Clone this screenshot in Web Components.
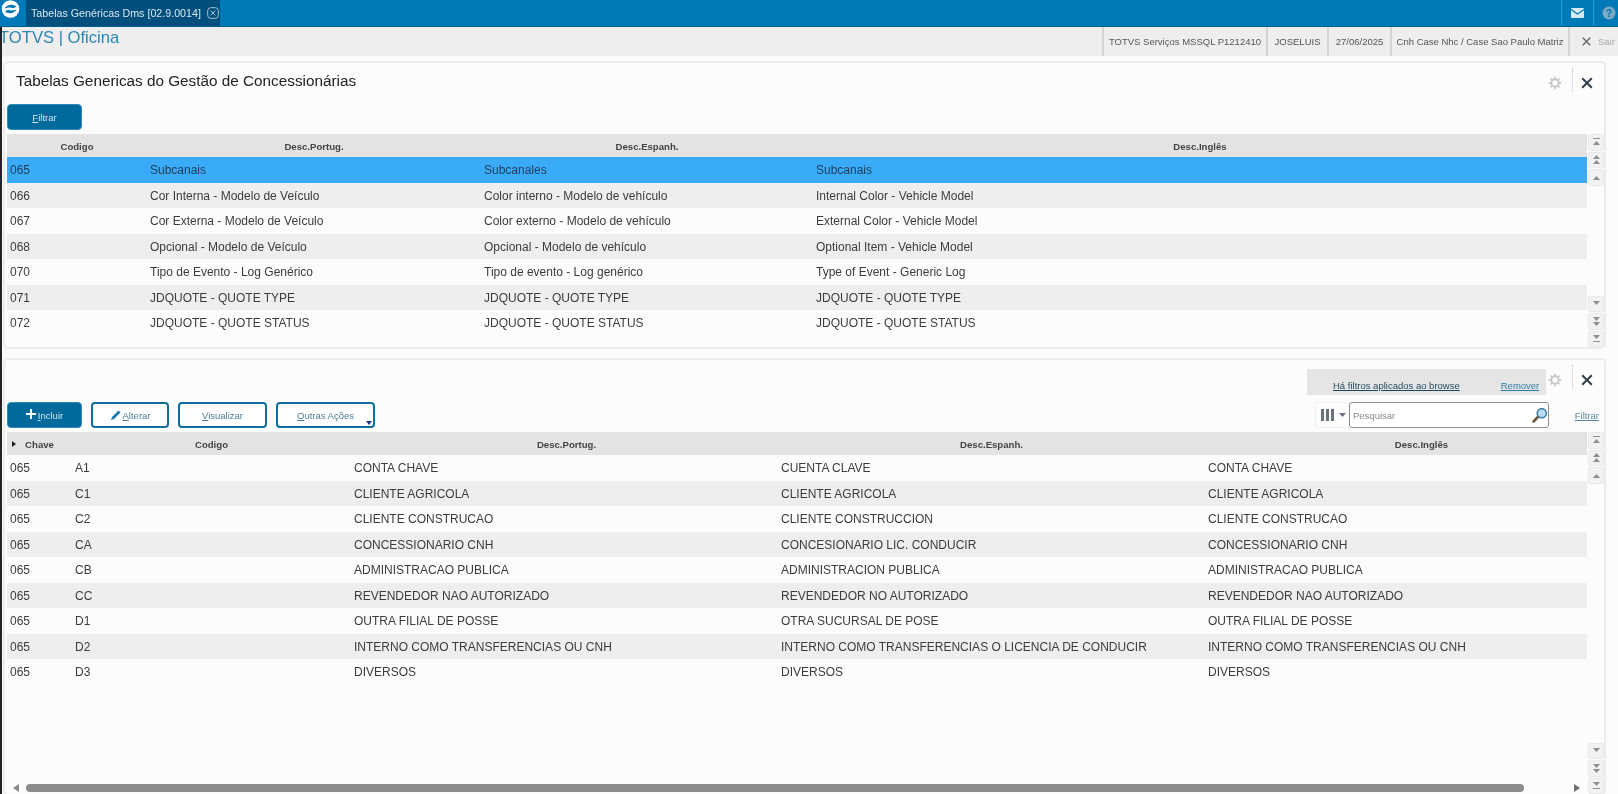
<!DOCTYPE html>
<html lang="pt">
<head>
<meta charset="utf-8">
<title>Tabelas Genéricas Dms</title>
<style>
  html, body { margin: 0; height: 794px; overflow: hidden; background: #fbfbfb; }
  body { font-family: "Liberation Sans", Arial, sans-serif; }
  #app { display: flex; flex-direction: column; height: 794px; filter: blur(.35px); background: #fbfbfb; }
  #content { flex: 1; min-height: 0; border-left: 2px solid #222; }
  #panels { display: flex; flex-direction: column; gap: 9px; padding: 5px 12px 0 1px; }
</style>
</head>
<body>
<div id="app">
  <top-bar title-text="Tabelas Genéricas Dms [02.9.0014]"></top-bar>
  <div id="content">
    <status-bar></status-bar>
    <div id="panels">
      <grid-panel style="height:288px" heading="Tabelas Genericas do Gestão de Concessionárias">
        <action-button slot="actions" variant="primary" style="width:75px" mnemonic="F" label="iltrar"></action-button>
        <data-grid source="tabelas"></data-grid>
      </grid-panel>
      <grid-panel style="height:438px" filtered>
        <action-button slot="actions" variant="primary" icon="plus" style="width:75px" mnemonic="I" label="ncluir"></action-button>
        <action-button slot="actions" icon="pencil" style="width:78px;margin-left:9px" mnemonic="A" label="lterar"></action-button>
        <action-button slot="actions" style="width:89px;margin-left:9px" mnemonic="V" label="isualizar"></action-button>
        <action-button slot="actions" style="width:99px;margin-left:9px" mnemonic="O" label="utras Ações" caret></action-button>
        <search-box slot="actions"></search-box>
        <data-grid source="itens" hscroll></data-grid>
      </grid-panel>
    </div>
  </div>
</div>

<script>
// Dados das duas grades
const GRID_DATA = {
  tabelas: {
    columns: [140, 334, 332, 774],
    headers: ['Codigo', 'Desc.Portug.', 'Desc.Espanh.', 'Desc.Inglês'],
    selected: 0,
    greyOn: 1,
    rows: [
      ['065', 'Subcanais', 'Subcanales', 'Subcanais'],
      ['066', 'Cor Interna - Modelo de Veículo', 'Color interno - Modelo de vehículo', 'Internal Color - Vehicle Model'],
      ['067', 'Cor Externa - Modelo de Veículo', 'Color externo - Modelo de vehículo', 'External Color - Vehicle Model'],
      ['068', 'Opcional - Modelo de Veículo', 'Opcional - Modelo de vehículo', 'Optional Item - Vehicle Model'],
      ['070', 'Tipo de Evento - Log Genérico', 'Tipo de evento - Log genérico', 'Type of Event - Generic Log'],
      ['071', 'JDQUOTE - QUOTE TYPE', 'JDQUOTE - QUOTE TYPE', 'JDQUOTE - QUOTE TYPE'],
      ['072', 'JDQUOTE - QUOTE STATUS', 'JDQUOTE - QUOTE STATUS', 'JDQUOTE - QUOTE STATUS']
    ]
  },
  itens: {
    columns: [65, 279, 427, 427, 433],
    headers: ['Chave', 'Codigo', 'Desc.Portug.', 'Desc.Espanh.', 'Desc.Inglês'],
    headerPad: [0, 0, 4, 0, 0],
    selected: -1,
    greyOn: 1,
    sortMark: true,
    rows: [
      ['065', 'A1', 'CONTA CHAVE', 'CUENTA CLAVE', 'CONTA CHAVE'],
      ['065', 'C1', 'CLIENTE AGRICOLA', 'CLIENTE AGRICOLA', 'CLIENTE AGRICOLA'],
      ['065', 'C2', 'CLIENTE CONSTRUCAO', 'CLIENTE CONSTRUCCION', 'CLIENTE CONSTRUCAO'],
      ['065', 'CA', 'CONCESSIONARIO CNH', 'CONCESIONARIO LIC. CONDUCIR', 'CONCESSIONARIO CNH'],
      ['065', 'CB', 'ADMINISTRACAO PUBLICA', 'ADMINISTRACION PUBLICA', 'ADMINISTRACAO PUBLICA'],
      ['065', 'CC', 'REVENDEDOR NAO AUTORIZADO', 'REVENDEDOR NO AUTORIZADO', 'REVENDEDOR NAO AUTORIZADO'],
      ['065', 'D1', 'OUTRA FILIAL DE POSSE', 'OTRA SUCURSAL DE POSE', 'OUTRA FILIAL DE POSSE'],
      ['065', 'D2', 'INTERNO COMO TRANSFERENCIAS OU CNH', 'INTERNO COMO TRANSFERENCIAS O LICENCIA DE CONDUCIR', 'INTERNO COMO TRANSFERENCIAS OU CNH'],
      ['065', 'D3', 'DIVERSOS', 'DIVERSOS', 'DIVERSOS']
    ]
  }
};

const GEAR_ICON = `<svg width="14" height="14" viewBox="0 0 14 14"><circle cx="7" cy="7" r="3.7" fill="none" stroke="#c9c9c9" stroke-width="2"/><path d="M7 .8v2M7 11.2v2M.8 7h2M11.2 7h2M2.6 2.6L4 4M10 10l1.4 1.4M11.4 2.6L10 4M4 10l-1.4 1.4" stroke="#c9c9c9" stroke-width="1.8"/></svg>`;
const CLOSE_ICON = `<svg width="12" height="12" viewBox="0 0 12 12"><path d="M1.2 1.2l9.6 9.6M10.8 1.2l-9.6 9.6" stroke="#2f3f4c" stroke-width="2"/></svg>`;

// Barra azul do topo
class TopBar extends HTMLElement {
  constructor() {
    super();
    this.attachShadow({ mode: 'open' });
  }

  connectedCallback() {
    this.shadowRoot.innerHTML = `
      <style>
        :host { display: flex; height: 27px; flex: none; background: #0079b8; border-bottom: 1px solid #005c8c; box-sizing: border-box; overflow: hidden; padding-left: 1px; }
        .logo { width: 25px; flex: none; }
        .tab { width: 194px; flex: none; background: #004f7c; color: #d9e6ee; display: flex; align-items: center; padding-left: 5px; box-sizing: border-box; font-size: 10.7px; white-space: nowrap; }
        .tab svg { margin-left: 6px; }
        .spacer { flex: 1; }
        .tool { width: 32px; box-sizing: border-box; display: flex; align-items: center; justify-content: center; border-left: 1px solid #2e9ad2; }
      </style>
      <div class="logo">
        <svg width="25" height="26" viewBox="0 0 25 26" style="display:block"><circle cx="9.5" cy="9" r="8.8" fill="#fff"/><path d="M3.5 8.5C6 4.2 12 3.8 15.5 6.8L12 8.2C9.5 7 6.8 7.2 3.5 8.5z" fill="#0079b8"/><path d="M15.7 9.5c-2.5 4.3-8.5 4.7-12 1.7L7.2 9.8c2.5 1.2 5.2 1 8.5-.3z" fill="#0079b8"/></svg>
      </div>
      <div class="tab">
        <span>${this.getAttribute('title-text')}</span>
        <svg width="12" height="12" viewBox="0 0 12 12"><rect x=".7" y=".7" width="10.6" height="10.6" rx="3" fill="none" stroke="#a9c4d4"/><path d="M3.6 3.6l4.8 4.8M8.4 3.6L3.6 8.4" stroke="#a9c4d4"/></svg>
      </div>
      <div class="spacer"></div>
      <div class="tool">
        <svg width="13" height="10" viewBox="0 0 13 10"><rect width="13" height="10" rx="1" fill="#d7eaf5"/><path d="M0 1.5l6.5 4.5L13 1.5" fill="none" stroke="#0079b8" stroke-width="1.1"/></svg>
      </div>
      <div class="tool" style="width:25px;justify-content:flex-start;padding-left:8px">
        <svg width="14" height="14" viewBox="0 0 14 14"><circle cx="7" cy="7" r="6.5" fill="#7ba8c3"/><text x="7" y="11" text-anchor="middle" font-family="Liberation Sans" font-weight="700" font-size="10.5" fill="#0079b8">?</text></svg>
      </div>
    `;
  }
}

// Faixa cinza com ambiente, usuario, data e filial
class StatusBar extends HTMLElement {
  constructor() {
    super();
    this.attachShadow({ mode: 'open' });
  }

  connectedCallback() {
    this.shadowRoot.innerHTML = `
      <style>
        :host { display: flex; height: 29px; flex: none; background: #eeeeee; align-items: stretch; overflow: hidden; }
        .brand { flex: 1; margin-left: -3px; font-size: 16.6px; line-height: 22px; color: #2b86b3; white-space: nowrap; }
        .cell { display: flex; align-items: center; justify-content: center; box-sizing: border-box; border-left: 2px solid #d4d4d4; font-size: 9.5px; color: #555; white-space: nowrap; }
        .exit { color: #aaa; justify-content: flex-start; padding-left: 12px; gap: 7px; }
      </style>
      <div class="brand">TOTVS | Oficina</div>
      <div class="cell" style="width:164px">TOTVS Serviços MSSQL P1212410</div>
      <div class="cell" style="width:61px">JOSELUIS</div>
      <div class="cell" style="width:63px">27/06/2025</div>
      <div class="cell" style="width:178px">Cnh Case Nhc / Case Sao Paulo Matriz</div>
      <div class="cell exit" style="width:50px">
        <svg width="9" height="9" viewBox="0 0 9 9"><path d="M.8.8l7.4 7.4M8.2.8L.8 8.2" stroke="#666" stroke-width="1.4"/></svg>
        <span>Sair</span>
      </div>
    `;
  }
}

// Painel branco com titulo, acoes e conteudo
class GridPanel extends HTMLElement {
  constructor() {
    super();
    this.attachShadow({ mode: 'open' });
  }

  connectedCallback() {
    const heading = this.getAttribute('heading') || '';
    const notice = this.hasAttribute('filtered') ? `
      <div class="notice">
        <u style="color:#1d4a63">Há filtros aplicados ao browse</u>
        <u style="color:#2c7da6;margin-left:41px">Remover</u>
      </div>` : '';
    this.shadowRoot.innerHTML = `
      <style>
        :host { display: flex; flex-direction: column; flex: none; box-sizing: border-box; background: #fcfcfc; border: 2px solid #ececec; border-radius: 5px; padding: 0 0 0 2px; overflow: hidden; }
        .head { display: flex; height: 41px; flex: none; align-items: flex-start; }
        .title { flex: 1; font-size: 15.3px; line-height: 35px; color: #222; padding-left: 9px; }
        .notice { width: 239px; height: 26px; margin-top: 9px; background: #e5e5e5; font-size: 9.5px; display: flex; align-items: flex-end; padding: 0 0 4px 26px; box-sizing: border-box; white-space: nowrap; }
        .notice u { text-decoration-thickness: 1px; }
        .gear { width: 26px; margin-top: 13px; display: flex; justify-content: center; padding-right: 8px; box-sizing: border-box; }
        .close { width: 31px; height: 24px; margin-top: 5px; display: flex; align-items: center; justify-content: center; border-left: 1px dotted #c6c6c6; box-sizing: border-box; margin-right: 1px; padding: 5px 2px 0 0; }
        .actions { display: flex; height: 26px; flex: none; align-items: stretch; margin-bottom: 4px; }
        .body { flex: 1; display: flex; min-height: 0; }
        ::slotted(data-grid) { flex: 1; min-width: 0; }
      </style>
      <div class="head">
        <div class="title">${heading}</div>
        ${notice}
        <div class="gear">${GEAR_ICON}</div>
        <div class="close">${CLOSE_ICON}</div>
      </div>
      <div class="actions"><slot name="actions"></slot></div>
      <div class="body"><slot></slot></div>
    `;
    // o segundo painel tem um pixel a mais no cabecalho
    if (this.hasAttribute('filtered')) {
      this.shadowRoot.querySelector('.head').style.height = '42px';
    }
  }
}

// Botao da barra de acoes
class ActionButton extends HTMLElement {
  constructor() {
    super();
    this.attachShadow({ mode: 'open' });
  }

  connectedCallback() {
    const icons = {
      plus: `<svg width="10" height="10" viewBox="0 0 10 10" style="margin-top:-2px"><path d="M5 0v10M0 5h10" stroke="#fff" stroke-width="2"/></svg>`,
      pencil: `<svg width="11" height="11" viewBox="0 0 11 11"><path d="M1 10l1-3 6.5-6.5 2 2L4 9z" fill="#1b78ab"/></svg>`
    };
    const icon = icons[this.getAttribute('icon')] || '';
    this.shadowRoot.innerHTML = `
      <style>
        :host { display: flex; box-sizing: border-box; flex: none; position: relative; align-items: center; justify-content: center; gap: 2px; border-radius: 4px; border: 2px solid #0e6f9f; background: #fff; color: #4f7d99; font-size: 9.5px; white-space: nowrap; }
        :host([variant="primary"]) { background: #006a9c; border: 1px solid #2f8ab8; color: #d3e3ec; }
        u { text-decoration-thickness: 1px; }
        .caret { position: absolute; right: 1px; bottom: 1px; width: 0; height: 0; border: 3px solid transparent; border-top: 4px solid #1c2f9a; border-bottom: 0; }
      </style>
      ${icon}<span><u>${this.getAttribute('mnemonic')}</u>${this.getAttribute('label')}</span>
      ${this.hasAttribute('caret') ? '<span class="caret"></span>' : ''}
    `;
  }
}

// Seletor de colunas, campo de pesquisa e link de filtro
class SearchBox extends HTMLElement {
  constructor() {
    super();
    this.attachShadow({ mode: 'open' });
  }

  connectedCallback() {
    this.shadowRoot.innerHTML = `
      <style>
        :host { display: flex; flex: none; margin-left: auto; align-items: stretch; font-size: 9.5px; }
        .cols { width: 34px; display: flex; align-items: center; gap: 5px; padding-left: 5px; box-sizing: border-box; background: #fdfdfd; border: 1px solid #f0f0f0; border-right: 0; border-radius: 3px 0 0 3px; }
        .input { width: 200px; box-sizing: border-box; display: flex; align-items: center; justify-content: space-between; border: 1px solid #8d8d8d; border-radius: 3px; padding: 0 0 0 3px; color: #8a8a8a; background: #fff; }
        .link { width: 55px; display: flex; align-items: center; justify-content: flex-end; padding-right: 5px; box-sizing: border-box; color: #5b87a0; text-decoration: underline; }
      </style>
      <div class="cols">
        <svg width="13" height="12" viewBox="0 0 13 12"><path d="M0 0h3v12H0zM5 0h3v12H5zM10 0h3v12h-3z" fill="#68737f"/></svg>
        <svg width="7" height="4" viewBox="0 0 7 4"><path d="M0 0h7L3.5 4z" fill="#68737f"/></svg>
      </div>
      <div class="input">
        <span>Pesquisar</span>
        <svg width="16" height="16" viewBox="0 0 15 15"><path d="M6 9l-4.5 4.5" stroke="#6b5a3f" stroke-width="2.6" stroke-linecap="round"/><circle cx="9.2" cy="5.8" r="4.3" fill="#bcdcf0" stroke="#3f7ea6" stroke-width="1.5"/></svg>
      </div>
      <div class="link">Filtrar</div>
    `;
  }
}

// Coluna de botoes de rolagem ao lado da grade
class ScrollRail extends HTMLElement {
  constructor() {
    super();
    this.attachShadow({ mode: 'open' });
  }

  button(kind) {
    const up = 'M1 4L4.5 0 8 4z';
    const down = 'M1 0L4.5 4 8 0z';
    const shapes = {
      first: `<path d="M1 0h7v1H1z"/><path d="${up}" transform="translate(0 3)"/>`,
      pageUp: `<path d="${up}"/><path d="${up}" transform="translate(0 5)"/>`,
      up: `<path d="${up}" transform="translate(0 3)"/>`,
      down: `<path d="${down}" transform="translate(0 2)"/>`,
      pageDown: `<path d="${down}"/><path d="${down}" transform="translate(0 5)"/>`,
      last: `<path d="${down}" transform="translate(0 1)"/><path d="M1 7h7v1H1z"/>`
    };
    return `<div class="btn"><svg width="9" height="9" viewBox="0 0 9 9" fill="#8f8f8f">${shapes[kind]}</svg></div>`;
  }

  connectedCallback() {
    this.shadowRoot.innerHTML = `
      <style>
        :host { display: flex; flex-direction: column; justify-content: space-between; width: 16px; flex: none; margin-left: 1px; }
        .group { display: flex; flex-direction: column; gap: 1px; }
        .btn { height: 16.5px; box-sizing: border-box; display: flex; align-items: center; justify-content: center; background: #f2f2f2; border: 1px solid #e9e9e9; border-radius: 2px; }
      </style>
      <div class="group">${['first', 'pageUp', 'up'].map(k => this.button(k)).join('')}</div>
      <div class="group">${['down', 'pageDown', 'last'].map(k => this.button(k)).join('')}</div>
    `;
  }
}

// Grade de dados
class DataGrid extends HTMLElement {
  constructor() {
    super();
    this.attachShadow({ mode: 'open' });
  }

  connectedCallback() {
    const data = GRID_DATA[this.getAttribute('source')];
    const template = data.columns.map(w => `${w}px`).join(' ');
    const pads = data.headerPad || [];
    this.shadowRoot.innerHTML = `
      <style>
        :host { display: flex; min-height: 0; }
        .main { flex: 1; min-width: 0; display: flex; flex-direction: column; overflow: hidden; }
        .row { display: grid; grid-template-columns: ${template}; flex: none; }
        .header { height: 23px; padding-top: 1px; box-sizing: border-box; background: #e3e3e3; font-size: 9.6px; font-weight: 700; color: #444; align-items: center; text-align: center; position: relative; }
        .mark { position: absolute; left: 5px; top: 9px; width: 0; height: 0; border: 3px solid transparent; border-left: 4px solid #222; border-right: 0; }
        .cell { height: 25.55px; line-height: 27px; padding-left: 3px; font-size: 12px; color: #3c3c3c; white-space: nowrap; overflow: hidden; box-sizing: border-box; }
        .row.grey { background: #eeeeee; }
        .row.selected { background: #3aabf9; }
        .row.selected .cell { color: #1f3d55; }
        .hscroll { margin-top: auto; margin-bottom: 2px; height: 9px; display: flex; align-items: center; flex: none; padding-left: 6px; }
        .hscroll .left { width: 0; height: 0; border: 4px solid transparent; border-right: 6px solid #8a8a8a; border-left: 0; }
        .hscroll .thumb { width: 1498px; height: 8px; margin-left: 7px; background: #8c8c8c; border-radius: 4px; }
        .hscroll .right { width: 0; height: 0; margin-left: 50px; border: 4px solid transparent; border-left: 6px solid #6f6f6f; border-right: 0; }
      </style>
      <div class="main">
        <div class="row header">
          ${data.sortMark ? '<span class="mark"></span>' : ''}
          ${data.headers.map((h, i) => `<div style="padding-left:${pads[i] || 0}px">${h}</div>`).join('')}
        </div>
        ${data.rows.map((row, i) => {
          const cls = i === data.selected ? 'selected' : (i % 2 === data.greyOn ? 'grey' : '');
          return `<div class="row ${cls}">${row.map(c => `<div class="cell">${c}</div>`).join('')}</div>`;
        }).join('')}
        ${this.hasAttribute('hscroll') ? '<div class="hscroll"><span class="left"></span><span class="thumb"></span><span class="right"></span></div>' : ''}
      </div>
      <scroll-rail></scroll-rail>
    `;
  }
}

customElements.define('top-bar', TopBar);
customElements.define('status-bar', StatusBar);
customElements.define('grid-panel', GridPanel);
customElements.define('action-button', ActionButton);
customElements.define('search-box', SearchBox);
customElements.define('scroll-rail', ScrollRail);
customElements.define('data-grid', DataGrid);
</script>
</body>
</html>
